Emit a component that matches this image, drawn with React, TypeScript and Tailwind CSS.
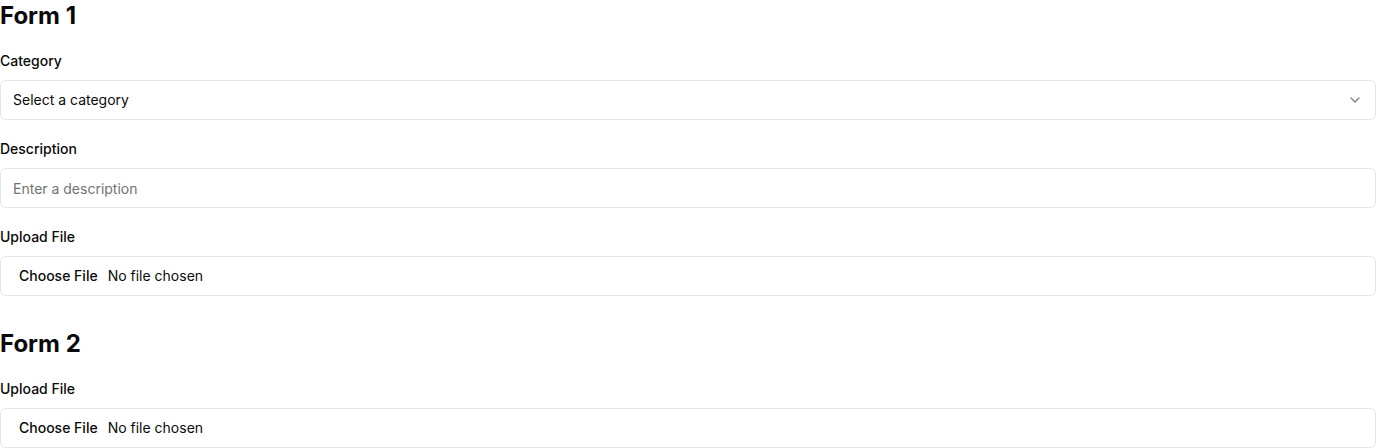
import React from 'react';
import { ChevronDown } from 'lucide-react';

const inputClass =
  "flex h-10 w-full rounded-md border border-neutral-200 bg-white px-3 py-2 text-sm text-neutral-950 placeholder:text-neutral-500 outline-none";

const labelClass = "text-sm font-medium leading-[18px] text-neutral-950";

const FileField = () => (
  <div className="flex flex-col gap-2.5">
    <label className={labelClass}>Upload File</label>
    <input
      type="file"
      className={inputClass + " file:mr-1 file:border-0 file:bg-transparent file:px-1.5 file:py-px file:text-sm file:font-medium file:text-neutral-950"}
    />
  </div>
);

const App = () => {
  return (
    <div className="min-h-screen bg-white font-['Inter',sans-serif] text-neutral-950">
      <div className="flex flex-col gap-8">
        <div className="flex flex-col gap-5">
          <h2 className="text-2xl font-bold">Form 1</h2>
          <div className="flex flex-col gap-2.5">
            <label className={labelClass}>Category</label>
            <button className="flex h-10 w-full items-center justify-between rounded-md border border-neutral-200 bg-white px-3 py-2 text-sm">
              <span>Select a category</span>
              <ChevronDown className="h-4 w-4 opacity-50" />
            </button>
          </div>
          <div className="flex flex-col gap-2.5">
            <label className={labelClass}>Description</label>
            <input className={inputClass} placeholder="Enter a description" />
          </div>
          <FileField />
        </div>
        <div className="flex flex-col gap-5">
          <h2 className="text-2xl font-bold">Form 2</h2>
          <FileField />
        </div>
      </div>
    </div>
  );
};

export default App;
